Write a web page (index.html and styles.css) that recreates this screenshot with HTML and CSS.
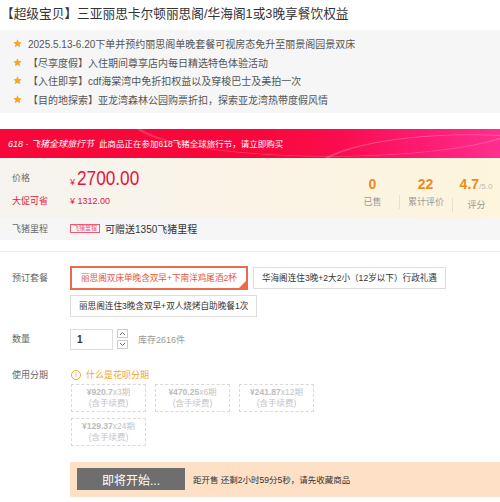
FILE: index.html
```html
<!DOCTYPE html>
<html lang="zh-CN">
<head>
    <meta charset="UTF-8">
    <meta name="viewport" content="width=device-width, initial-scale=1.0">
    <title>三亚丽思卡尔顿 - 商品详情</title>
    <link rel="stylesheet" href="styles.css">
</head>
<body>
    <h1 class="item-title">【超级宝贝】三亚丽思卡尔顿丽思阁/华海阁1或3晚享餐饮权益</h1>

    <ul class="highlights">
        <li><svg class="star" viewBox="0 0 10 10"><path d="M5 0.4l1.4 2.9 3.2.4-2.3 2.2.6 3.2L5 7.6 2.1 9.1l.6-3.2L.4 3.7l3.2-.4z"/></svg>2025.5.13-6.20下单并预约丽思阁单晚套餐可视房态免升至丽景阁园景双床</li>
        <li><svg class="star" viewBox="0 0 10 10"><path d="M5 0.4l1.4 2.9 3.2.4-2.3 2.2.6 3.2L5 7.6 2.1 9.1l.6-3.2L.4 3.7l3.2-.4z"/></svg>【尽享度假】入住期间尊享店内每日精选特色体验活动</li>
        <li><svg class="star" viewBox="0 0 10 10"><path d="M5 0.4l1.4 2.9 3.2.4-2.3 2.2.6 3.2L5 7.6 2.1 9.1l.6-3.2L.4 3.7l3.2-.4z"/></svg>【入住即享】cdf海棠湾中免折扣权益以及穿梭巴士及美拍一次</li>
        <li><svg class="star" viewBox="0 0 10 10"><path d="M5 0.4l1.4 2.9 3.2.4-2.3 2.2.6 3.2L5 7.6 2.1 9.1l.6-3.2L.4 3.7l3.2-.4z"/></svg>【目的地探索】亚龙湾森林公园购票折扣，探索亚龙湾热带度假风情</li>
    </ul>

    <div class="promo-banner">
        <span class="promo-name">618 · 飞猪全球旅行节</span>
        <span class="promo-text">此商品正在参加618飞猪全球旅行节，请立即购买</span>
    </div>

    <div class="price-panel">
        <div class="price-rows">
            <div class="price-row">
                <span class="label">价格</span>
                <span class="price"><small>¥</small><b>2700.00</b></span>
            </div>
            <div class="save-row">
                <span class="label red">大促可省</span>
                <span class="save">¥ 1312.00</span>
            </div>
        </div>
        <div class="stats">
            <div class="stat"><strong>0</strong><span>已售</span></div>
            <div class="stat"><strong>22</strong><span class="split">累计评价</span></div>
            <div class="stat"><strong>4.7<em>/5.0</em></strong><span class="split">评分</span></div>
        </div>
    </div>

    <div class="mileage">
        <span class="label">飞猪里程</span>
        <span class="tag">飞猪里程</span>
        <span>可赠送1350飞猪里程</span>
    </div>

    <div class="sku">
        <div class="sku-row">
            <span class="label tall">预订套餐</span>
            <div class="options">
                <span class="option selected">丽思阁双床单晚含双早+下南洋鸡尾酒2杯</span>
                <span class="option">华海阁连住3晚+2大2小（12岁以下）行政礼遇</span>
                <span class="option">丽思阁连住3晚含双早+双人烧烤自助晚餐1次</span>
            </div>
        </div>

        <div class="sku-row qty-row">
            <span class="label">数量</span>
            <input class="qty" type="text" value="1">
            <div class="spinner">
                <button type="button"><svg viewBox="0 0 9 7"><polyline points="2,5 4.5,2.5 7,5"/></svg></button>
                <button type="button"><svg viewBox="0 0 9 7"><polyline points="2,2 4.5,4.5 7,2"/></svg></button>
            </div>
            <span class="stock">库存2616件</span>
        </div>

        <div class="sku-row install-row">
            <span class="label">使用分期</span>
            <div class="install">
                <div class="install-help"><span class="info">i</span>什么是花呗分期</div>
                <div class="plans">
                    <div class="plan"><b>¥920.7</b>x3期<br>(含手续费)</div>
                    <div class="plan"><b>¥470.25</b>x6期<br>(含手续费)</div>
                    <div class="plan"><b>¥241.87</b>x12期<br>(含手续费)</div>
                    <div class="plan"><b>¥129.37</b>x24期<br>(含手续费)</div>
                </div>
            </div>
        </div>

        <div class="buy-bar">
            <button type="button" class="buy-btn">即将开始...</button>
            <span class="countdown">距开售 还剩2小时59分5秒，请先收藏商品</span>
        </div>
    </div>
</body>
</html>
```

FILE: styles.css
```css
* {
    box-sizing: border-box;
}
body {
    margin: 0;
    font-family: "Liberation Sans", "Noto Sans CJK SC", sans-serif;
    font-size: 9px;
    color: #333;
    background: #fff;
}
.item-title {
    margin: 0;
    height: 30px;
    padding: 6px 0 0 1px;
    font-size: 12.7px;
    font-weight: normal;
    line-height: 16px;
    color: #333;
}
.highlights {
    list-style: none;
    margin: 0;
    padding: 4px 0 4px 13px;
    background: #f6f6f6;
    font-size: 10px;
    color: #555;
}
.highlights li {
    display: flex;
    align-items: center;
    height: 18.7px;
}
.star {
    width: 9px;
    height: 9px;
    margin-right: 6px;
    fill: #f6a623;
}
.promo-banner {
    margin-top: 16px;
    height: 29px;
    padding-left: 8px;
    display: flex;
    align-items: center;
    color: #fff;
    background:
        radial-gradient(ellipse 160px 40px at 470px 45px, transparent 96%, rgba(255,255,255,0.25) 98%, transparent 100%),
        radial-gradient(ellipse 200px 36px at 330px -8px, transparent 96%, rgba(255,255,255,0.2) 98%, transparent 100%),
        linear-gradient(90deg, #f8083a 0%, #f8083a 52%, #fa0d4f 68%, #fd1c73 85%, #ff2e8e 100%);
}
.promo-name {
    font-size: 9px;
    font-style: italic;
    margin-right: 5px;
}
.promo-text {
    font-size: 8.5px;
}
.price-panel {
    height: 60px;
    display: flex;
    justify-content: space-between;
    background: linear-gradient(90deg, #f6f3f0 0%, #faf3e6 50%, #fdf5dc 100%);
}
.price-rows {
    padding: 6px 0 0 12px;
}
.price-row, .save-row {
    display: flex;
    align-items: center;
}
.price-row {
    height: 28px;
}
.save-row {
    height: 18px;
}
.label {
    width: 58px;
    flex-shrink: 0;
    color: #666;
}
.label.red {
    color: #e3173e;
}
.price {
    color: #e3173e;
    display: flex;
    align-items: baseline;
}
.price small {
    font-size: 9px;
    margin-right: 2px;
}
.price b {
    font-size: 21px;
    font-weight: normal;
    display: inline-block;
    transform: scaleX(0.82);
    transform-origin: left center;
}
.save {
    color: #e3173e;
    font-size: 9px;
}
.stats {
    display: flex;
    padding-top: 18px;
}
.stat {
    display: flex;
    flex-direction: column;
    align-items: center;
    width: 53px;
}
.stat:last-child {
    width: 48px;
}
.stat strong {
    color: #ef8a22;
    font-size: 14px;
    line-height: 16px;
    font-weight: bold;
}
.stat strong em {
    font-style: normal;
    font-weight: normal;
    font-size: 8px;
    color: #bbb;
}
.stat span {
    width: 100%;
    text-align: center;
    margin-top: 3px;
    line-height: 14px;
    color: #999;
}
.stat span.split {
    border-left: 1px solid #eadfcb;
}
.mileage {
    height: 22px;
    padding-left: 12px;
    display: flex;
    align-items: center;
    background: #f6f6f6;
    font-size: 10px;
}
.mileage .label {
    font-size: 9px;
}
.tag {
    border: 1px solid #f05a6e;
    color: #f05a6e;
    font-size: 6px;
    line-height: 7px;
    padding: 0 2px;
    margin-right: 5px;
}
.sku {
    margin-top: 11px;
    border-top: 1px solid #ebebeb;
    padding: 14px 0 0 12px;
}
.sku-row {
    display: flex;
    align-items: center;
}
.sku-row .label {
    align-self: flex-start;
    line-height: 24px;
}
.options {
    flex: 1;
    display: flex;
    flex-wrap: wrap;
    align-items: center;
    gap: 5px;
}
.option {
    position: relative;
    height: 22px;
    line-height: 20px;
    padding: 0 8px;
    border: 1px solid #ddd;
    color: #333;
    font-size: 8.6px;
    white-space: nowrap;
}
.option.selected {
    height: 24px;
    line-height: 20px;
    padding: 0 9px;
    border: 2px solid #ec6a4c;
    color: #e4573c;
}
.option.selected::after {
    content: "";
    position: absolute;
    right: 0;
    bottom: 0;
    border-style: solid;
    border-width: 0 0 7px 7px;
    border-color: transparent transparent #ec6a4c transparent;
}
.qty-row {
    margin-top: 12px;
}
.qty-row .label {
    line-height: 21px;
}
.qty {
    width: 43px;
    height: 21px;
    border: 1px solid #ddd;
    padding: 0 6px;
    font-family: inherit;
    font-size: 10px;
    font-weight: bold;
    color: #333;
}
.spinner {
    display: flex;
    flex-direction: column;
    gap: 2px;
    margin: 0 10px 0 4px;
}
.spinner button {
    width: 11px;
    height: 9px;
    padding: 0;
    border: 1px solid #ccc;
    background: #fff;
    display: flex;
    align-items: center;
    justify-content: center;
}
.spinner svg {
    width: 9px;
    height: 7px;
    fill: none;
    stroke: #666;
    stroke-width: 1;
}
.stock {
    color: #999;
}
.install-row {
    margin-top: 18px;
}
.install-row .label {
    line-height: 14px;
}
.install-help {
    display: flex;
    align-items: center;
    height: 14px;
    color: #f5a623;
}
.info {
    width: 10px;
    height: 10px;
    border: 1px solid #f5a623;
    border-radius: 50%;
    font-size: 7px;
    line-height: 8px;
    text-align: center;
    margin: 0 5px 0 1px;
}
.plans {
    display: flex;
    flex-wrap: wrap;
    gap: 6px 9px;
    width: 260px;
    margin-top: 2px;
    padding-left: 1px;
}
.plan {
    width: 75px;
    height: 28px;
    border: 1px dashed #d9d9d9;
    text-align: center;
    font-size: 8.5px;
    line-height: 11px;
    padding-top: 2px;
    color: #c4c4c4;
}
.plan b {
    color: #bbb;
}
.buy-bar {
    margin: 16px 0 0 58px;
    height: 35px;
    padding-left: 7px;
    display: flex;
    align-items: center;
    background: #fde0c6;
}
.buy-btn {
    width: 108px;
    height: 22px;
    border: none;
    background: #6e6e6e;
    color: #fff;
    font-family: inherit;
    font-size: 12px;
    margin-right: 8px;
    padding: 0;
}
.countdown {
    color: #333;
    font-size: 8.5px;
}
```
